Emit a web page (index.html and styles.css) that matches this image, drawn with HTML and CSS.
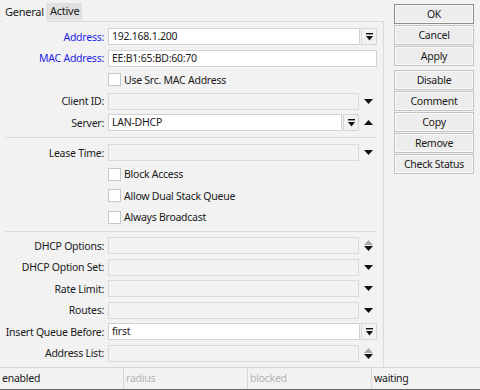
FILE: index.html
```html
<!DOCTYPE html>
<html lang="en">
<head>
    <meta charset="UTF-8">
    <title>DHCP Lease</title>
    <link rel="stylesheet" href="styles.css">
</head>
<body>

<div class="window">
    <div class="main">
        <div class="left">
            <div class="tabs">
                <span class="tab current">General</span>
                <span class="tab">Active</span>
            </div>

            <div class="panel">
                <div class="row">
                    <span class="label blue">Address:</span>
                    <div class="field">
                        <div class="box white">192.168.1.200</div>
                        <span class="pick"><svg width="7" height="8" viewBox="0 0 7 8"><rect x="0" y="0" width="7" height="1.4" fill="#111"/><polygon points="0,3 7,3 3.5,7.5" fill="#111"/></svg></span>
                    </div>
                </div>
                <div class="row">
                    <span class="label blue">MAC Address:</span>
                    <div class="field">
                        <div class="box white">EE:B1:65:BD:60:70</div>
                    </div>
                </div>
                <div class="row">
                    <span class="label"></span>
                    <div class="field"><span class="check"></span><span>Use Src. MAC Address</span></div>
                </div>
                <div class="row">
                    <span class="label">Client ID:</span>
                    <div class="field">
                        <div class="box"></div>
                        <span class="arrow"><svg width="9" height="5" viewBox="0 0 9 5"><polygon points="0,0 9,0 4.5,5" fill="#111"/></svg></span>
                    </div>
                </div>
                <div class="row">
                    <span class="label">Server:</span>
                    <div class="field">
                        <div class="box white">LAN-DHCP</div>
                        <span class="pick"><svg width="7" height="8" viewBox="0 0 7 8"><rect x="0" y="0" width="7" height="1.4" fill="#111"/><polygon points="0,3 7,3 3.5,7.5" fill="#111"/></svg></span>
                        <span class="arrow"><svg width="9" height="5" viewBox="0 0 9 5"><polygon points="0,5 9,5 4.5,0" fill="#111"/></svg></span>
                    </div>
                </div>

                <div class="sep"></div>

                <div class="row">
                    <span class="label">Lease Time:</span>
                    <div class="field">
                        <div class="box"></div>
                        <span class="arrow"><svg width="9" height="5" viewBox="0 0 9 5"><polygon points="0,0 9,0 4.5,5" fill="#111"/></svg></span>
                    </div>
                </div>
                <div class="row">
                    <span class="label"></span>
                    <div class="field"><span class="check"></span><span>Block Access</span></div>
                </div>
                <div class="row">
                    <span class="label"></span>
                    <div class="field"><span class="check"></span><span>Allow Dual Stack Queue</span></div>
                </div>
                <div class="row">
                    <span class="label"></span>
                    <div class="field"><span class="check"></span><span>Always Broadcast</span></div>
                </div>

                <div class="sep second"></div>

                <div class="row">
                    <span class="label">DHCP Options:</span>
                    <div class="field">
                        <div class="box"></div>
                        <span class="arrow"><svg width="9" height="11" viewBox="0 0 9 11"><polygon points="0,5 9,5 4.5,0" fill="#a3aba3"/><polygon points="0,6 9,6 4.5,11" fill="#111"/></svg></span>
                    </div>
                </div>
                <div class="row">
                    <span class="label">DHCP Option Set:</span>
                    <div class="field">
                        <div class="box"></div>
                        <span class="arrow"><svg width="9" height="5" viewBox="0 0 9 5"><polygon points="0,0 9,0 4.5,5" fill="#111"/></svg></span>
                    </div>
                </div>
                <div class="row">
                    <span class="label">Rate Limit:</span>
                    <div class="field">
                        <div class="box"></div>
                        <span class="arrow"><svg width="9" height="5" viewBox="0 0 9 5"><polygon points="0,0 9,0 4.5,5" fill="#111"/></svg></span>
                    </div>
                </div>
                <div class="row">
                    <span class="label">Routes:</span>
                    <div class="field">
                        <div class="box"></div>
                        <span class="arrow"><svg width="9" height="5" viewBox="0 0 9 5"><polygon points="0,0 9,0 4.5,5" fill="#111"/></svg></span>
                    </div>
                </div>
                <div class="row">
                    <span class="label">Insert Queue Before:</span>
                    <div class="field">
                        <div class="box white">first</div>
                        <span class="pick"><svg width="7" height="8" viewBox="0 0 7 8"><rect x="0" y="0" width="7" height="1.4" fill="#111"/><polygon points="0,3 7,3 3.5,7.5" fill="#111"/></svg></span>
                    </div>
                </div>
                <div class="row">
                    <span class="label">Address List:</span>
                    <div class="field">
                        <div class="box"></div>
                        <span class="arrow"><svg width="9" height="11" viewBox="0 0 9 11"><polygon points="0,5 9,5 4.5,0" fill="#a3aba3"/><polygon points="0,6 9,6 4.5,11" fill="#111"/></svg></span>
                    </div>
                </div>
            </div>
        </div>

        <div class="buttons">
            <button class="default">OK</button>
            <button>Cancel</button>
            <button>Apply</button>
            <button class="gap">Disable</button>
            <button>Comment</button>
            <button>Copy</button>
            <button>Remove</button>
            <button>Check Status</button>
        </div>
    </div>

    <div class="status">
        <span class="cell">enabled</span>
        <span class="cell dim">radius</span>
        <span class="cell dim">blocked</span>
        <span class="cell">waiting</span>
    </div>
</div>

</body>
</html>
```

FILE: styles.css
```css
body { margin: 0; background-color: #f2f2f2; font-family: "Noto Sans", "Open Sans", sans-serif; font-size: 10.5px; letter-spacing: -0.25px; color: #1a1a1a; }
.window { width: 480px; height: 390px; display: flex; flex-direction: column; overflow: hidden; }
.main { flex: 1; display: flex; }
.left { width: 384px; display: flex; flex-direction: column; }

.tabs { display: flex; height: 21px; padding-left: 2px; align-items: flex-end; }
.tab { height: 17px; line-height: 16px; width: 36px; padding: 0 0 0 4px; box-sizing: border-box; background: #e0e0e0; margin-bottom: 1px; font-size: 11px; }
.tab.current { height: 19px; line-height: 17px; width: 44px; padding-left: 3px; background: #f2f2f2; margin-bottom: -1px; position: relative; z-index: 1; }

.panel { flex: 1; border-top: 1px solid #dadada; border-right: 1px solid #dadada; padding-top: 4px; }

.row { display: flex; align-items: center; height: 21.5px; }
.label { width: 104px; text-align: right; padding-right: 4px; white-space: nowrap; }
.blue { color: #1f1fe6; }
.field { width: 269px; display: flex; align-items: center; }
.box { flex: 1; height: 15px; line-height: 15px; padding-left: 3px; border: 1px solid #dadada; background: #f2f2f2; white-space: nowrap; }
.box.white { background: #fff; border-color: #d2d2d2; }
.pick { width: 14px; height: 15px; margin-left: 1px; border: 1px solid #d6d6d6; background: #f2f2f2; display: flex; align-items: center; justify-content: center; }
.arrow { width: 17px; display: flex; justify-content: center; padding-left: 1px; }
.check { width: 11px; height: 11px; border: 1px solid #c6c6c6; background: #fff; margin-right: 3px; }

.sep { height: 1px; background: #dadada; margin: 3.5px 7px 4px 5px; }
.sep.second { margin: 3px 7px 3px 5px; }

.buttons { display: flex; flex-direction: column; gap: 1px; padding-top: 4px; margin-left: 10px; width: 80px; }
button { height: 20px; padding: 0; font-family: inherit; font-size: 10.5px; letter-spacing: -0.25px; color: #1a1a1a; background: #ededed; border: 1px solid #c2c2c2; box-shadow: inset 0 0 0 1px #f9f9f9; }
button.default { border-color: #8c8c8c; }
button.gap { margin-top: 3px; }

.status { height: 21px; display: flex; border-top: 1px solid #d8d8d8; border-bottom: 1px solid #666; }
.cell { width: 124px; border-right: 1px solid #d6d6d6; padding-left: 2px; line-height: 21px; box-sizing: border-box; }
.cell:last-child { border-right: none; flex: 1; }
.dim { color: #b4b4b4; }
```
